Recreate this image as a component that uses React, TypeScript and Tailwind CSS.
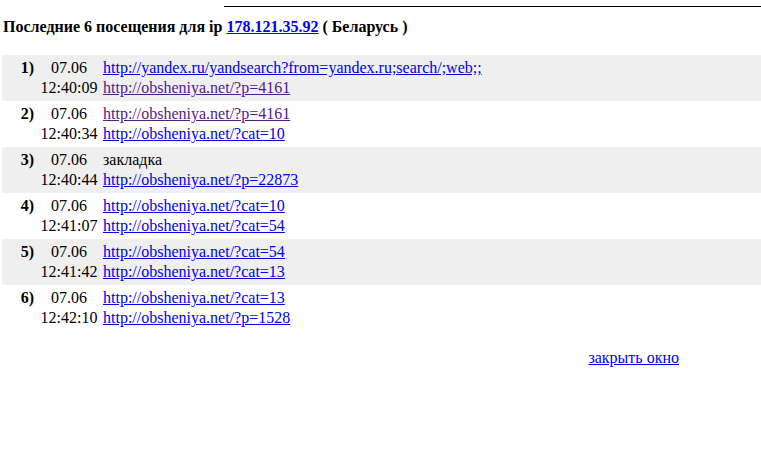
const visits = [
  { n: '1)', date: '07.06', time: '12:40:09', from: { text: 'http://yandex.ru/yandsearch?from=yandex.ru;search/;web;;', visited: false }, to: { text: 'http://obsheniya.net/?p=4161', visited: true } },
  { n: '2)', date: '07.06', time: '12:40:34', from: { text: 'http://obsheniya.net/?p=4161', visited: true }, to: { text: 'http://obsheniya.net/?cat=10', visited: false } },
  { n: '3)', date: '07.06', time: '12:40:44', from: null, to: { text: 'http://obsheniya.net/?p=22873', visited: false } },
  { n: '4)', date: '07.06', time: '12:41:07', from: { text: 'http://obsheniya.net/?cat=10', visited: false }, to: { text: 'http://obsheniya.net/?cat=54', visited: false } },
  { n: '5)', date: '07.06', time: '12:41:42', from: { text: 'http://obsheniya.net/?cat=54', visited: false }, to: { text: 'http://obsheniya.net/?cat=13', visited: false } },
  { n: '6)', date: '07.06', time: '12:42:10', from: { text: 'http://obsheniya.net/?cat=13', visited: false }, to: { text: 'http://obsheniya.net/?p=1528', visited: false } },
]

function Url({ text, visited }: { text: string; visited: boolean }) {
  return (
    <a href="#" className={visited ? 'underline text-[#551a8b]' : 'underline text-[#0000ee]'}>
      {text}
    </a>
  )
}

export default function App() {
  return (
    <div className="min-h-[459px] bg-white text-black text-[16px] font-['Liberation_Serif',serif]">
      <div className="pt-[6px] pl-[224px]">
        <div className="h-px bg-black" />
      </div>

      <h1 className="mt-[10px] ml-[3px] text-[16px] font-bold leading-[19px]">
        Последние 6 посещения для ip{' '}
        <a href="#" className="underline text-[#0000ee]">178.121.35.92</a> ( Беларусь )
      </h1>

      <div className="mt-[19px] ml-[2px]">
        {visits.map((v, i) => (
          <div key={v.n} className={`flex py-[3px] leading-[20px] ${i % 2 === 0 ? 'bg-[#efefef]' : 'bg-white'}`}>
            <div className="w-[32px] text-right font-bold">{v.n}</div>
            <div className="ml-[2px] w-[66px] text-center">
              <div>{v.date}</div>
              <div>{v.time}</div>
            </div>
            <div className="ml-[1px] whitespace-nowrap">
              <div>{v.from ? <Url {...v.from} /> : 'закладка'}</div>
              <div><Url {...v.to} /></div>
            </div>
          </div>
        ))}
      </div>

      <div className="mt-[17px] flex justify-end pr-[82px] leading-[20px]">
        <a href="#" className="underline text-[#0000ee]">закрыть окно</a>
      </div>
    </div>
  )
}
